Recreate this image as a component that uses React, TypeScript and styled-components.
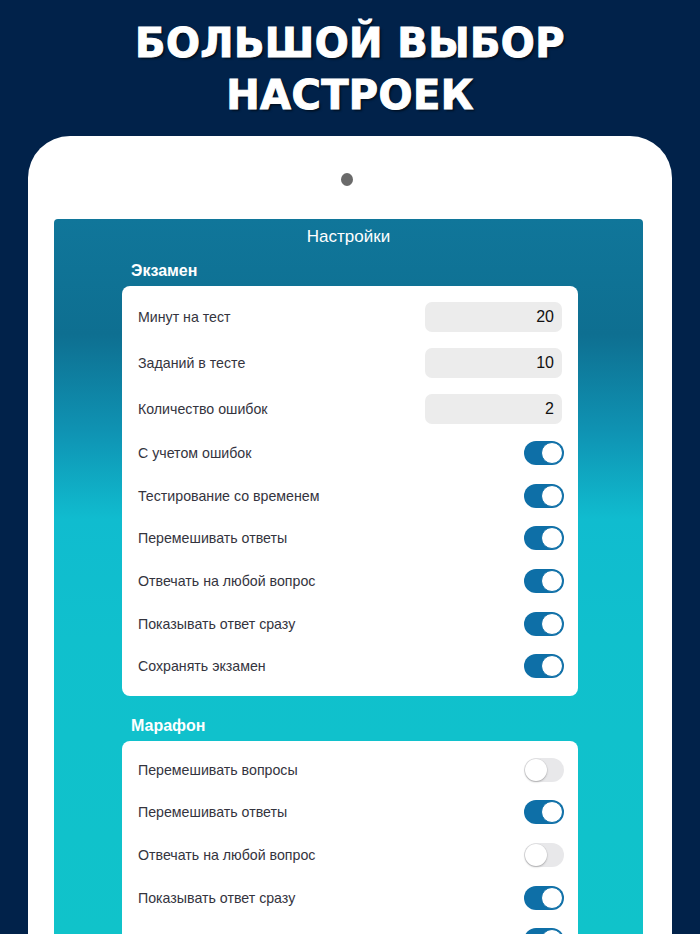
import React from "react";
import styled, { createGlobalStyle } from "styled-components";

const Global = createGlobalStyle`
  html, body { margin: 0; padding: 0; }
  body {
    background: #01224a;
    font-family: "Liberation Sans", Arial, sans-serif;
  }
`;

const Page = styled.div`
  width: 700px;
  height: 934px;
  overflow: hidden;
  background: #01224a;
  display: flex;
  flex-direction: column;
  align-items: stretch;
`;

const Heading = styled.h1`
  margin: 0;
  padding-top: 17px;
  font-family: "DejaVu Sans", sans-serif;
  font-weight: 700;
  font-size: 40px;
  line-height: 52px;
  letter-spacing: 0.4px;
  color: #ffffff;
  -webkit-text-stroke: 1px #ffffff;
  text-align: center;
  text-shadow: 2px 2px 2px rgba(0, 0, 0, 0.55);
`;

const Tablet = styled.div`
  margin: 15px 28px 0 28px;
  background: #ffffff;
  border-radius: 42px 42px 0 0;
  padding: 37px 29px 0 26px;
  flex: 1;
  display: flex;
  flex-direction: column;
  align-items: stretch;
`;

const Camera = styled.div`
  width: 12px;
  height: 13px;
  border-radius: 50%;
  background: #6a6a6a;
  align-self: center;
  margin-left: -3px;
`;

const Screen = styled.div`
  margin-top: 33px;
  flex: 1;
  border-radius: 4px 4px 0 0;
  background: linear-gradient(
    180deg,
    #10769a 0px,
    #0e6f91 115px,
    #0f94b4 215px,
    #10bccf 300px,
    #10c0cd 420px,
    #10c3ca 715px
  );
  display: flex;
  flex-direction: column;
  padding: 0 65px 0 68px;
`;

const ScreenTitle = styled.div`
  height: 36px;
  line-height: 36px;
  text-align: center;
  color: #ffffff;
  font-size: 17px;
  margin: 0 -65px 0 -68px;
`;

const SectionTitle = styled.div<{ $top: number }>`
  margin-top: ${(p) => p.$top}px;
  height: 31px;
  line-height: 31px;
  padding-left: 9px;
  color: #ffffff;
  font-weight: 700;
  font-size: 16px;
`;

const Card = styled.div`
  background: #ffffff;
  border-radius: 8px;
  padding: 8px 0;
  display: flex;
  flex-direction: column;
`;

const Row = styled.div<{ $h: number }>`
  height: ${(p) => p.$h}px;
  display: flex;
  align-items: center;
  justify-content: space-between;
  padding: 0 14px 0 16px;
`;

const Label = styled.span`
  font-size: 14.2px;
  color: #34343e;
`;

const NumberBox = styled.div`
  width: 137px;
  height: 30px;
  margin-right: 2px;
  border-radius: 7px;
  background: #ececec;
  box-sizing: border-box;
  padding-right: 8px;
  display: flex;
  align-items: center;
  justify-content: flex-end;
  font-size: 16px;
  color: #111111;
`;

const Track = styled.div<{ $on: boolean }>`
  width: 40px;
  height: 24px;
  border-radius: 12px;
  box-sizing: border-box;
  background: ${(p) => (p.$on ? "#0e6fa7" : "#e8e8ea")};
  display: flex;
  align-items: center;
  justify-content: ${(p) => (p.$on ? "flex-end" : "flex-start")};
  padding: 0 1px;
`;

const Knob = styled.div<{ $on: boolean }>`
  width: 22px;
  height: 22px;
  border-radius: 50%;
  box-sizing: border-box;
  background: #ffffff;
  border: ${(p) => (p.$on ? "1px solid #0e6fa7" : "none")};
  box-shadow: ${(p) =>
    p.$on ? "none" : "0 1px 2px rgba(0,0,0,0.25), 0 0 0 0.5px rgba(0,0,0,0.06)"};
`;

const Toggle = ({ on }: { on: boolean }) => (
  <Track $on={on}>
    <Knob $on={on} />
  </Track>
);

const exam = [
  { label: "С учетом ошибок", on: true },
  { label: "Тестирование со временем", on: true },
  { label: "Перемешивать ответы", on: true },
  { label: "Отвечать на любой вопрос", on: true },
  { label: "Показывать ответ сразу", on: true },
  { label: "Сохранять экзамен", on: true },
];

const marathon = [
  { label: "Перемешивать вопросы", on: false },
  { label: "Перемешивать ответы", on: true },
  { label: "Отвечать на любой вопрос", on: false },
  { label: "Показывать ответ сразу", on: true },
  { label: "Сохранять марафон", on: true },
];

export default function App() {
  return (
    <Page>
      <Global />
      <Heading>
        БОЛЬШОЙ ВЫБОР
        <br />
        НАСТРОЕК
      </Heading>
      <Tablet>
        <Camera />
        <Screen>
          <ScreenTitle>Настройки</ScreenTitle>
          <SectionTitle $top={0}>Экзамен</SectionTitle>
          <Card>
            <Row $h={46}>
              <Label>Минут на тест</Label>
              <NumberBox>20</NumberBox>
            </Row>
            <Row $h={46}>
              <Label>Заданий в тесте</Label>
              <NumberBox>10</NumberBox>
            </Row>
            <Row $h={46}>
              <Label>Количество ошибок</Label>
              <NumberBox>2</NumberBox>
            </Row>
            {exam.map((r) => (
              <Row $h={42.6} key={r.label}>
                <Label>{r.label}</Label>
                <Toggle on={r.on} />
              </Row>
            ))}
          </Card>
          <SectionTitle $top={14}>Марафон</SectionTitle>
          <Card>
            {marathon.map((r) => (
              <Row $h={42.6} key={r.label}>
                <Label>{r.label}</Label>
                <Toggle on={r.on} />
              </Row>
            ))}
          </Card>
        </Screen>
      </Tablet>
    </Page>
  );
}
